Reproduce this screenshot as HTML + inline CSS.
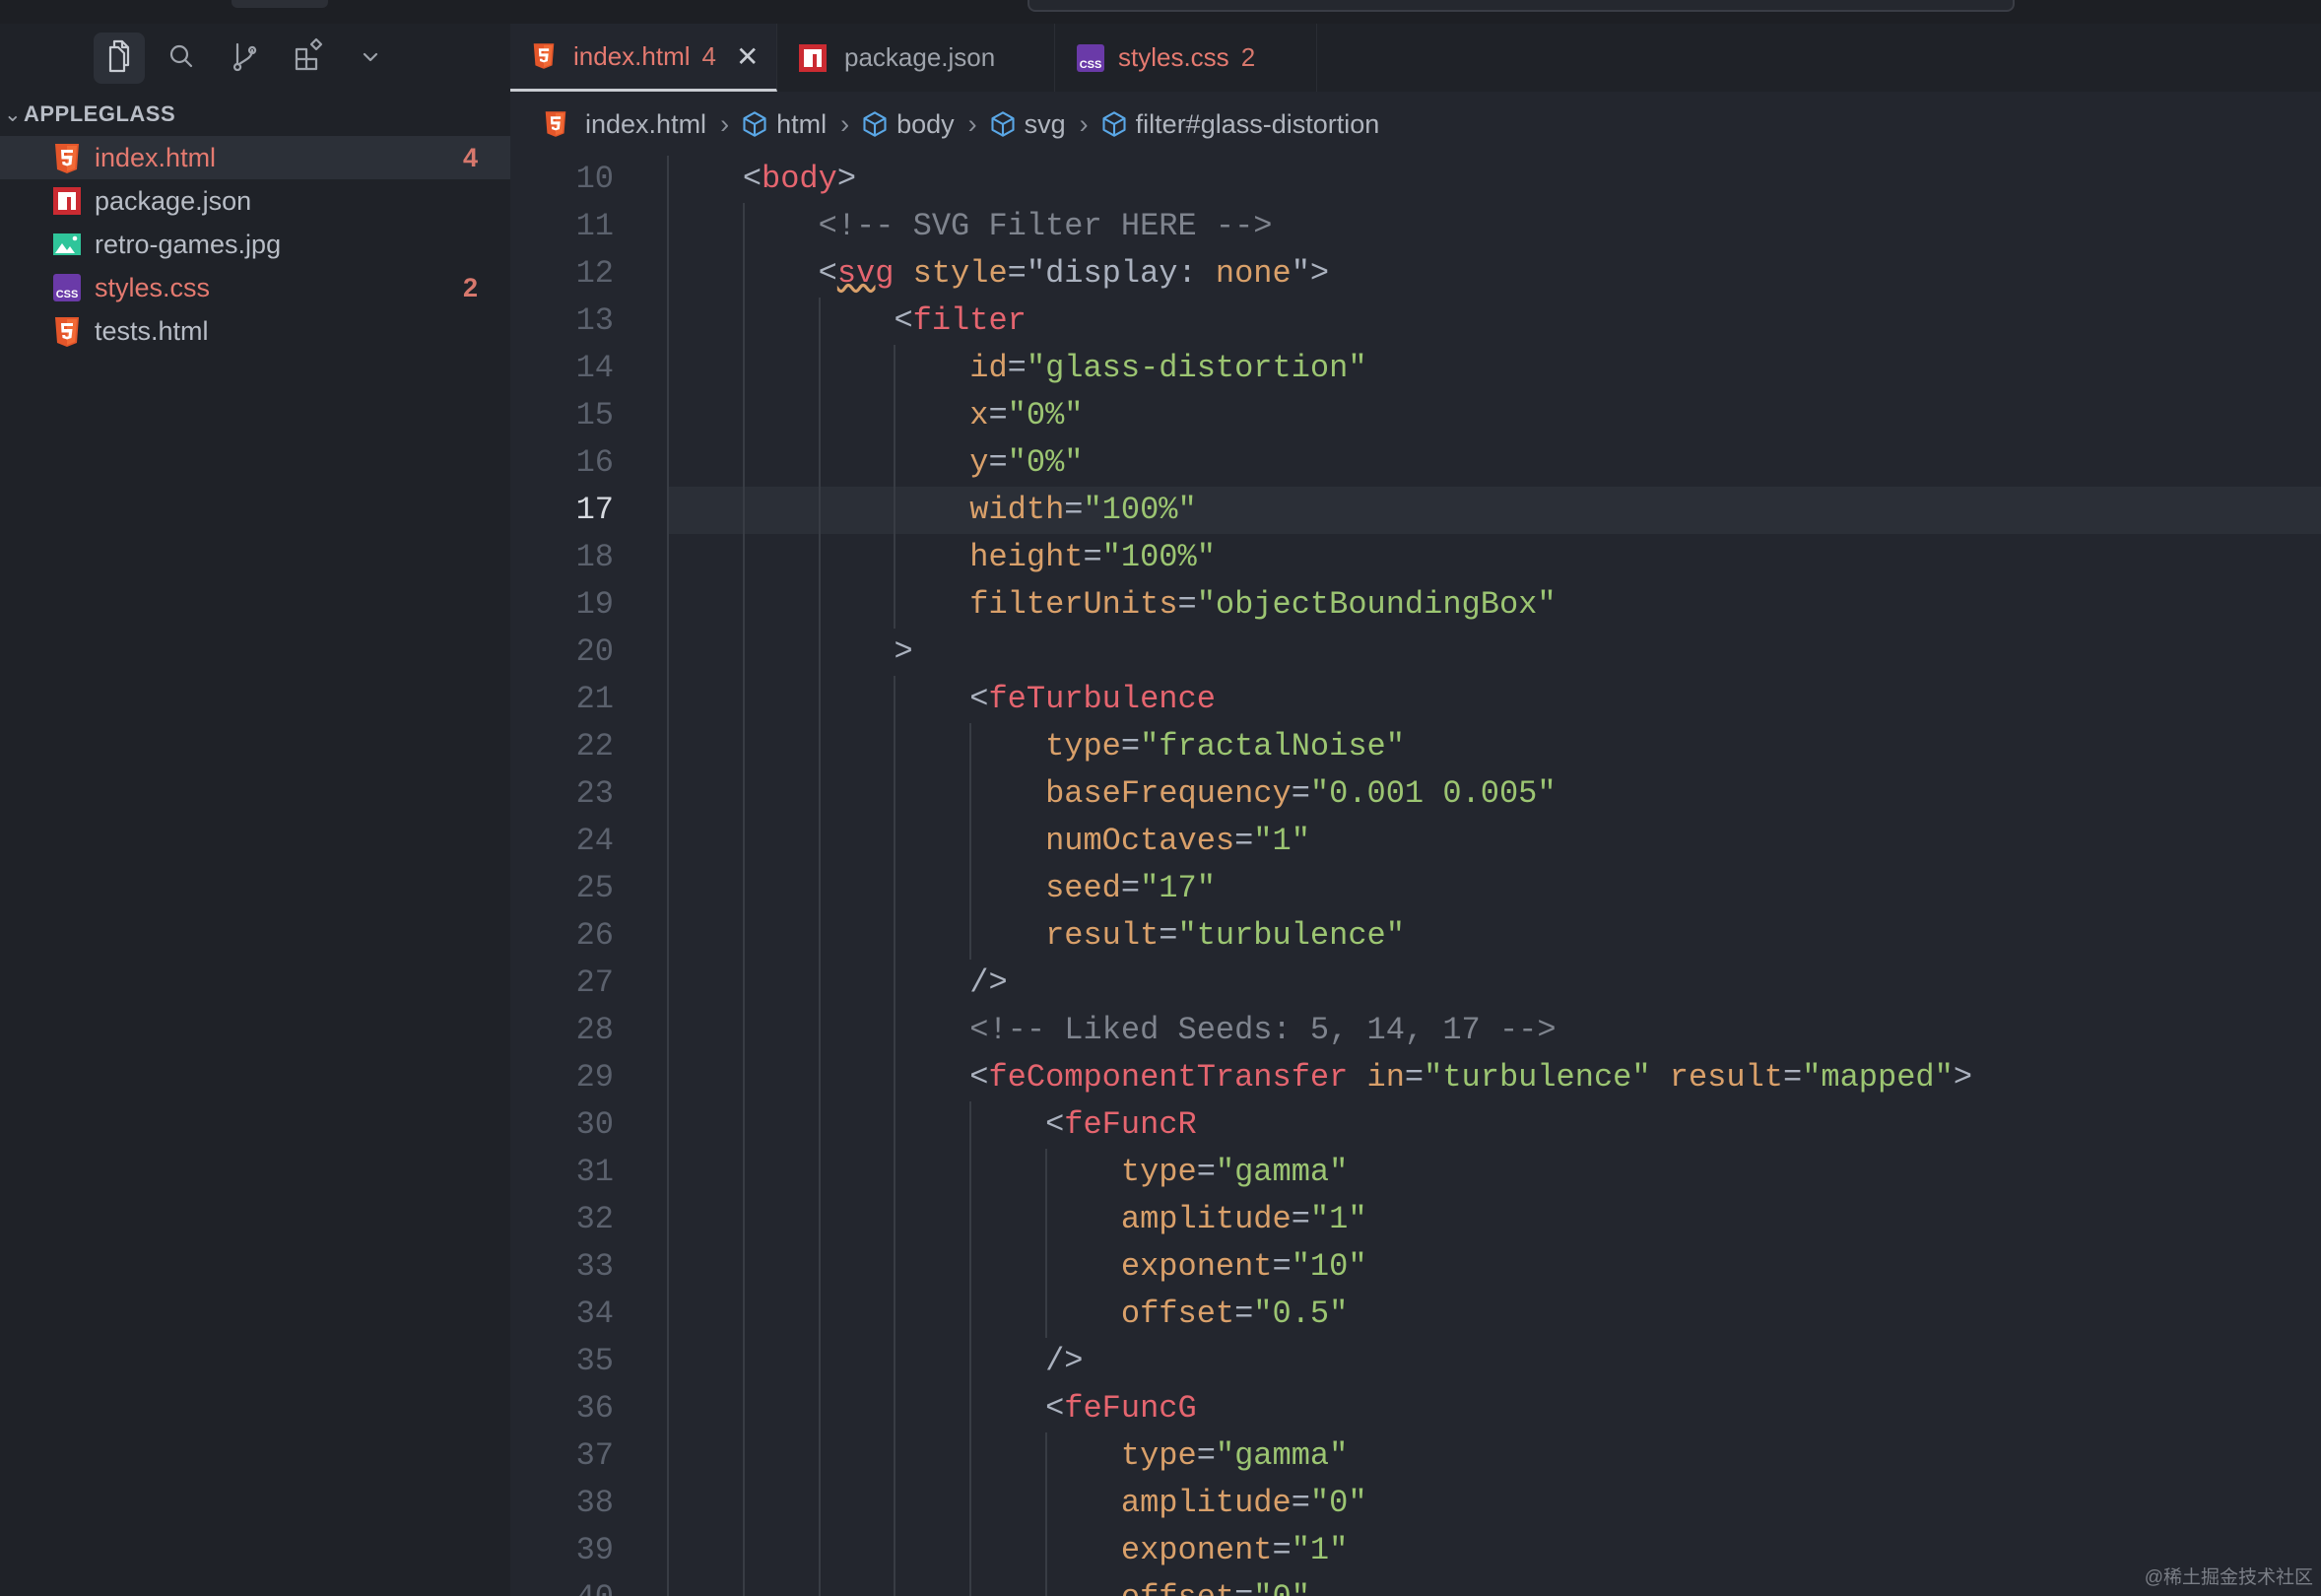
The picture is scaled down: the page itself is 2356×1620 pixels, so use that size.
<!DOCTYPE html>
<html style="overflow:hidden;width:2356px;height:1620px"><head><meta charset="utf-8">
<style>
*{margin:0;padding:0;box-sizing:border-box}
body{width:2356px;height:1620px;overflow:hidden;background:#23262e;position:relative;font-family:"Liberation Sans",sans-serif}
#wrap{position:absolute;left:0;top:0;width:2356px;height:1620px;overflow:hidden}
.abs{position:absolute}
#title{left:0;top:0;width:2356px;height:24px;background:#1d1f24}
#side{left:0;top:24px;width:518px;height:1596px;background:#1f2228}
#tabbar{left:518px;top:24px;width:1838px;height:69px;background:#1f2228}
.tab{position:absolute;top:0;height:69px;display:flex;align-items:center;font-size:26px;border-right:1px solid #2a2d34}
.row{position:absolute;left:0;width:518px;height:44px;display:flex;align-items:center;font-size:27px;color:#b8bdc6}
.row .ic{position:absolute;left:54px;top:8px}
.row .t{position:absolute;left:96px}
.row .b{position:absolute;left:470px;font-weight:bold;color:#d7786d}
.red{color:#e57a70}
.code{position:absolute;left:677px;font-family:"Liberation Mono",monospace;font-size:32px;height:48px;line-height:48px;white-space:pre;color:#abb2bf}
.ln{position:absolute;left:500px;width:123px;text-align:right;font-family:"Liberation Mono",monospace;font-size:32px;height:48px;line-height:48px;color:#5b616d}
.g{position:absolute;width:2px;background:#383c44}
.k{color:#e5656f}.a{color:#d9a06a}.s{color:#9cc572}.c{color:#7f848e}
.bc{position:absolute;top:106px;height:40px;display:flex;align-items:center;font-size:27px;color:#b0b5be}
.sep{margin:0 12px 0 14px;color:#8a8f98}
</style></head><body><div id="wrap">
<div id="title" class="abs"></div>
<div class="abs" style="left:235px;top:0;width:98px;height:8px;background:#2c2f36;border-radius:0 0 6px 6px"></div>
<div class="abs" style="left:1043px;top:-10px;width:1002px;height:22px;border:2px solid #3a3d45;border-radius:8px;background:#25282f"></div>
<div id="side" class="abs"></div>
<div class="abs" style="left:95px;top:33px;width:52px;height:52px;background:#2c3038;border-radius:8px"></div>
<svg class="abs" style="left:0;top:0" width="420" height="100" fill="none" stroke="#c8ccd3" stroke-width="2.2" stroke-linecap="round" stroke-linejoin="round">
<path d="M112 48h8l6 6v18h-14z M116 48v-6h8l6 6v18h-4 M124 42v6h6"/>
<circle cx="182" cy="55" r="8" stroke="#9ea3ab"/><path d="M188 61l6 6" stroke="#9ea3ab"/>
<path d="M241 45v20 M241 65a3 3 0 1 0 0.1 0 M256 48a3 3 0 1 0 0.1 0 M256 51c0 8-8 10-13 14" stroke="#9ea3ab"/>
<path d="M301 50h10v20h-10z M311 60h10v10h-10z M301 60h10 M316 45l5-5 5 5-5 5z" stroke="#9ea3ab"/>
<path d="M370 55l6 6 6-6" stroke="#9ea3ab"/>
</svg>
<div class="abs" style="left:4px;top:104px;font-size:21px;color:#9ea3ab">⌄</div>
<div class="abs" style="left:24px;top:103px;font-size:22px;font-weight:bold;color:#b8bdc6;letter-spacing:0.5px">APPLEGLASS</div>
<div class="abs" style="left:0;top:138px;width:518px;height:44px;background:#2c3038"></div>
<svg width="0" height="0" style="position:absolute"><defs>
<symbol id="h5" viewBox="0 0 28 30"><path d="M2 0h24l-2 26-10 4-10-4z" fill="#e4562a"/><path d="M14 2v26l8-3 2-23z" fill="#f16a36"/><path d="M8 6h12v3h-9v3h8.5l-1 9-4.5 1.5-4.5-1.5-.3-3h3l.2 1.3 1.6.5 1.6-.5.3-3.8H8.5z" fill="#fff"/></symbol>
<symbol id="npm" viewBox="0 0 28 28"><rect width="28" height="28" fill="#cb2b32"/><path d="M5 5h18v18h-5v-13h-4v13h-9z" fill="#fff"/></symbol>
<symbol id="img" viewBox="0 0 28 28"><rect y="3" width="28" height="22" fill="#2fc59a"/><path d="M2 23l7-10 5 7 3-4 5 7z" fill="#fff"/><circle cx="22" cy="8" r="2.3" fill="#fff"/></symbol>
<symbol id="css" viewBox="0 0 28 28"><rect width="28" height="28" rx="3" fill="#6a3aa8"/><text x="14" y="24" font-family="Liberation Sans" font-weight="bold" font-size="11" fill="#fff" text-anchor="middle">CSS</text></symbol>
<symbol id="cube" viewBox="0 0 24 24"><path d="M12 2l9 5v10l-9 5-9-5V7z M3 7l9 5 9-5 M12 12v10" fill="none" stroke="#5aa7e6" stroke-width="1.8" stroke-linejoin="round"/></symbol>
</defs></svg>
<div class="row" style="top:138px"><svg class="ic" width="28" height="30"><use href="#h5"/></svg><span class="t red">index.html</span><span class="b">4</span></div>
<div class="row" style="top:182px"><svg class="ic" width="28" height="28"><use href="#npm"/></svg><span class="t">package.json</span></div>
<div class="row" style="top:226px"><svg class="ic" width="28" height="28"><use href="#img"/></svg><span class="t">retro-games.jpg</span></div>
<div class="row" style="top:270px"><svg class="ic" width="28" height="28"><use href="#css"/></svg><span class="t red">styles.css</span><span class="b">2</span></div>
<div class="row" style="top:314px"><svg class="ic" width="28" height="30"><use href="#h5"/></svg><span class="t">tests.html</span></div>

<div id="tabbar" class="abs">
<div class="tab" style="left:0;width:271px;background:#23262e;border-bottom:3px solid #c9ccd2">
<svg style="margin-left:22px" width="24" height="28" viewBox="0 0 28 30"><use href="#h5"/></svg>
<span class="red" style="margin-left:18px">index.html</span><span style="margin-left:12px;color:#d7786d">4</span><span style="margin-left:20px;color:#c8ccd3;font-size:28px">✕</span></div>
<div class="tab" style="left:271px;width:282px">
<svg style="margin-left:22px" width="28" height="28"><use href="#npm"/></svg>
<span style="margin-left:18px;color:#9ea3ab">package.json</span></div>
<div class="tab" style="left:553px;width:266px">
<svg style="margin-left:22px" width="28" height="28"><use href="#css"/></svg>
<span class="red" style="margin-left:14px">styles.css</span><span style="margin-left:12px;color:#d7786d">2</span></div>
</div>

<div class="bc" style="left:552px"><svg width="24" height="28" viewBox="0 0 28 30"><use href="#h5"/></svg>
<span style="margin-left:18px">index.html</span><span class="sep">›</span>
<svg width="28" height="28"><use href="#cube"/></svg><span style="margin-left:8px">html</span><span class="sep">›</span>
<svg width="28" height="28"><use href="#cube"/></svg><span style="margin-left:8px">body</span><span class="sep">›</span>
<svg width="28" height="28"><use href="#cube"/></svg><span style="margin-left:8px">svg</span><span class="sep">›</span>
<svg width="28" height="28"><use href="#cube"/></svg><span style="margin-left:8px">filter#glass-distortion</span></div>

<div class="abs" style="left:677px;top:494px;width:1679px;height:48px;background:#2b2f37"></div>

<div class="g" style="left:677px;top:158px;height:1464px"></div>
<div class="g" style="left:754px;top:206px;height:1416px"></div>
<div class="g" style="left:831px;top:302px;height:1320px"></div>
<div class="g" style="left:907px;top:350px;height:288px"></div>
<div class="g" style="left:907px;top:686px;height:936px"></div>
<div class="g" style="left:984px;top:734px;height:240px"></div>
<div class="g" style="left:984px;top:1118px;height:504px"></div>
<div class="g" style="left:1061px;top:1166px;height:192px"></div>
<div class="g" style="left:1061px;top:1454px;height:168px"></div>

<div style="position:absolute;left:0;top:2px;width:2356px;height:1618px;overflow:hidden">
<div class="ln" style="top:156px">10</div><div class="code" style="top:156px">    &lt;<span class="k">body</span>&gt;</div>
<div class="ln" style="top:204px">11</div><div class="code c" style="top:204px">        &lt;!-- SVG Filter HERE --&gt;</div>
<div class="ln" style="top:252px">12</div><div class="code" style="top:252px">        &lt;<span class="k" style="text-decoration:underline wavy #d9a06a">svg</span> <span class="a">style</span>="display: <span class="a">none</span>"&gt;</div>
<div class="ln" style="top:300px">13</div><div class="code" style="top:300px">            &lt;<span class="k">filter</span></div>
<div class="ln" style="top:348px">14</div><div class="code" style="top:348px">                <span class="a">id</span>=<span class="s">"glass-distortion"</span></div>
<div class="ln" style="top:396px">15</div><div class="code" style="top:396px">                <span class="a">x</span>=<span class="s">"0%"</span></div>
<div class="ln" style="top:444px">16</div><div class="code" style="top:444px">                <span class="a">y</span>=<span class="s">"0%"</span></div>
<div class="ln" style="top:492px;color:#d7dae0">17</div><div class="code" style="top:492px">                <span class="a">width</span>=<span class="s">"100%"</span></div>
<div class="ln" style="top:540px">18</div><div class="code" style="top:540px">                <span class="a">height</span>=<span class="s">"100%"</span></div>
<div class="ln" style="top:588px">19</div><div class="code" style="top:588px">                <span class="a">filterUnits</span>=<span class="s">"objectBoundingBox"</span></div>
<div class="ln" style="top:636px">20</div><div class="code" style="top:636px">            &gt;</div>
<div class="ln" style="top:684px">21</div><div class="code" style="top:684px">                &lt;<span class="k">feTurbulence</span></div>
<div class="ln" style="top:732px">22</div><div class="code" style="top:732px">                    <span class="a">type</span>=<span class="s">"fractalNoise"</span></div>
<div class="ln" style="top:780px">23</div><div class="code" style="top:780px">                    <span class="a">baseFrequency</span>=<span class="s">"0.001 0.005"</span></div>
<div class="ln" style="top:828px">24</div><div class="code" style="top:828px">                    <span class="a">numOctaves</span>=<span class="s">"1"</span></div>
<div class="ln" style="top:876px">25</div><div class="code" style="top:876px">                    <span class="a">seed</span>=<span class="s">"17"</span></div>
<div class="ln" style="top:924px">26</div><div class="code" style="top:924px">                    <span class="a">result</span>=<span class="s">"turbulence"</span></div>
<div class="ln" style="top:972px">27</div><div class="code" style="top:972px">                /&gt;</div>
<div class="ln" style="top:1020px">28</div><div class="code c" style="top:1020px">                &lt;!-- Liked Seeds: 5, 14, 17 --&gt;</div>
<div class="ln" style="top:1068px">29</div><div class="code" style="top:1068px">                &lt;<span class="k">feComponentTransfer</span> <span class="a">in</span>=<span class="s">"turbulence"</span> <span class="a">result</span>=<span class="s">"mapped"</span>&gt;</div>
<div class="ln" style="top:1116px">30</div><div class="code" style="top:1116px">                    &lt;<span class="k">feFuncR</span></div>
<div class="ln" style="top:1164px">31</div><div class="code" style="top:1164px">                        <span class="a">type</span>=<span class="s">"gamma"</span></div>
<div class="ln" style="top:1212px">32</div><div class="code" style="top:1212px">                        <span class="a">amplitude</span>=<span class="s">"1"</span></div>
<div class="ln" style="top:1260px">33</div><div class="code" style="top:1260px">                        <span class="a">exponent</span>=<span class="s">"10"</span></div>
<div class="ln" style="top:1308px">34</div><div class="code" style="top:1308px">                        <span class="a">offset</span>=<span class="s">"0.5"</span></div>
<div class="ln" style="top:1356px">35</div><div class="code" style="top:1356px">                    /&gt;</div>
<div class="ln" style="top:1404px">36</div><div class="code" style="top:1404px">                    &lt;<span class="k">feFuncG</span></div>
<div class="ln" style="top:1452px">37</div><div class="code" style="top:1452px">                        <span class="a">type</span>=<span class="s">"gamma"</span></div>
<div class="ln" style="top:1500px">38</div><div class="code" style="top:1500px">                        <span class="a">amplitude</span>=<span class="s">"0"</span></div>
<div class="ln" style="top:1548px">39</div><div class="code" style="top:1548px">                        <span class="a">exponent</span>=<span class="s">"1"</span></div>
<div class="ln" style="top:1596px">40</div><div class="code" style="top:1596px">                        <span class="a">offset</span>=<span class="s">"0"</span></div>
</div>

<div class="abs" style="right:8px;top:1586px;font-family:'Liberation Sans','Noto Sans CJK SC',sans-serif;font-size:19px;color:#7a7e86">@稀土掘金技术社区</div>
</div></body></html>
